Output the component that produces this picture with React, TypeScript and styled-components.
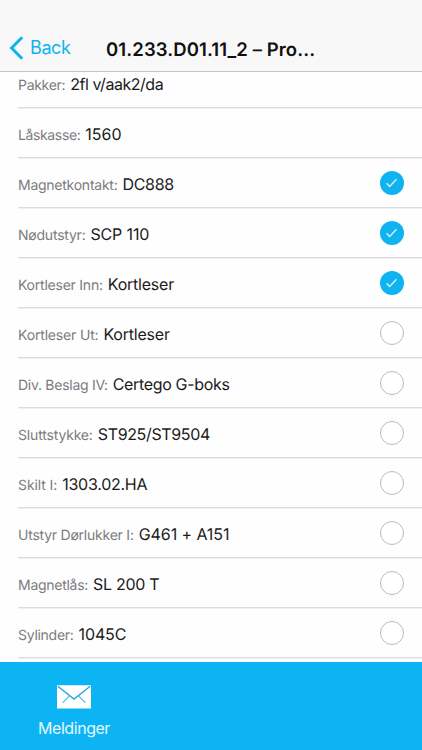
import React from "react";
import styled, { createGlobalStyle } from "styled-components";

const GlobalStyle = createGlobalStyle`
  * { box-sizing: border-box; }
  html, body { margin: 0; padding: 0; background: #fff; }
  body {
    font-family: Inter, "Liberation Sans", sans-serif;
    text-rendering: geometricPrecision;
  }
  button { font: inherit; border: 0; background: none; padding: 0; margin: 0; }
`;

const Screen = styled.div`
  display: flex;
  flex-direction: column;
  width: 422px;
  height: 750px;
  overflow: hidden;
  background: #fefefe;
`;

const NavBar = styled.header`
  flex: none;
  display: grid;
  grid-template-columns: 106px 210px 1fr;
  align-items: center;
  height: 72px;
  padding-top: 24px;
  background: #f8f8f8;
  border-bottom: 1px solid #c6c6c8;
`;

const BackButton = styled.button`
  display: flex;
  align-items: center;
  gap: 6px;
  padding-left: 9px;
  color: #0fb3f0;
  font-size: 18px;
  line-height: 24px;
  letter-spacing: -0.4px;
`;

const Title = styled.h1`
  margin: 0;
  padding-top: 4px;
  font-size: 18.5px;
  font-weight: 600;
  line-height: 24px;
  letter-spacing: 0.11px;
  white-space: nowrap;
  color: #101010;
`;

const List = styled.ul`
  flex: 1;
  min-height: 0;
  margin: 0;
  padding: 0 0 4px 18px;
  list-style: none;
  display: flex;
  flex-direction: column;
  justify-content: flex-end;
  overflow: hidden;
`;

const Row = styled.li`
  flex: none;
  display: flex;
  align-items: center;
  height: 50px;
  padding: 1px 18px 0 0;
  border-bottom: 1px solid #dcdcdd;
  box-shadow: 0 1px 0 #f1f1f1;
`;

const RowText = styled.div`
  flex: 1;
  display: flex;
  align-items: baseline;
  gap: 5px;
  padding-top: 3px;
  line-height: 24px;
  white-space: nowrap;
`;

const Label = styled.span<{ $spacing: number }>`
  font-size: 14px;
  letter-spacing: ${(p) => p.$spacing}px;
  color: #7c7c7e;
`;

const Value = styled.span<{ $spacing: number }>`
  font-size: 16px;
  letter-spacing: ${(p) => p.$spacing}px;
  color: #1b1b1b;
`;

const Check = styled.span<{ $checked: boolean }>`
  display: flex;
  align-items: center;
  justify-content: center;
  width: 24px;
  height: 24px;
  border-radius: 50%;
  border: ${(p) => (p.$checked ? "0" : "1px solid #bcbcbe")};
  background: ${(p) => (p.$checked ? "#0fb3f0" : "#fff")};
`;

const TabBar = styled.footer`
  flex: none;
  height: 88px;
  background: #0cb4f3;
`;

const Tab = styled.button`
  display: flex;
  flex-direction: column;
  align-items: center;
  width: 148px;
  padding-top: 23px;
  gap: 7px;
  color: #e4f8ff;
  font-size: 16px;
  line-height: 24px;
  letter-spacing: -0.45px;
`;

type Item = {
  label: string;
  value: string;
  checked?: boolean;
  labelSpacing: number;
  valueSpacing: number;
};

const items: Item[] = [
  { label: "Pakker:", value: "2fl v/aak2/da", labelSpacing: -0.3, valueSpacing: -0.46 },
  { label: "Låskasse:", value: "1560", labelSpacing: -0.37, valueSpacing: 0 },
  { label: "Magnetkontakt:", value: "DC888", checked: true, labelSpacing: -0.25, valueSpacing: -0.3 },
  { label: "Nødutstyr:", value: "SCP 110", checked: true, labelSpacing: -0.22, valueSpacing: -0.15 },
  { label: "Kortleser Inn:", value: "Kortleser", checked: true, labelSpacing: -0.23, valueSpacing: -0.22 },
  { label: "Kortleser Ut:", value: "Kortleser", checked: false, labelSpacing: -0.17, valueSpacing: -0.22 },
  { label: "Div. Beslag IV:", value: "Certego G-boks", checked: false, labelSpacing: -0.27, valueSpacing: -0.34 },
  { label: "Sluttstykke:", value: "ST925/ST9504", checked: false, labelSpacing: -0.17, valueSpacing: -0.35 },
  { label: "Skilt I:", value: "1303.02.HA", checked: false, labelSpacing: -0.1, valueSpacing: -0.25 },
  { label: "Utstyr Dørlukker I:", value: "G461 + A151", checked: false, labelSpacing: -0.23, valueSpacing: -0.08 },
  { label: "Magnetlås:", value: "SL 200 T", checked: false, labelSpacing: -0.27, valueSpacing: -0.3 },
  { label: "Sylinder:", value: "1045C", checked: false, labelSpacing: -0.27, valueSpacing: -0.15 },
];

const ChevronIcon = () => (
  <svg width="15" height="24" viewBox="0 0 15 24" fill="none">
    <path d="M13.2 1.2 2.6 12l10.6 10.8" stroke="currentColor" strokeWidth="3" />
  </svg>
);

const TickIcon = () => (
  <svg width="24" height="24" viewBox="0 0 24 24" fill="none">
    <path d="m6.6 12.3 3 3.2 6.9-7.2" stroke="#d9f4fe" strokeWidth="1.3" />
  </svg>
);

const EnvelopeIcon = () => (
  <svg width="34" height="24" viewBox="0 0 34 24" fill="none">
    <path d="M0 0.3h34v23.2H0z" fill="#fff" />
    <path d="M0.8 1.2 17 14 33.2 1.2" stroke="#22a9dc" strokeWidth="1.4" />
    <path d="M12.4 10.8 5.8 17.6M21.6 10.8l6.6 6.8" stroke="#45b9e5" strokeWidth="1.1" />
  </svg>
);

export default function App() {
  return (
    <>
      <GlobalStyle />
      <Screen>
        <NavBar>
          <BackButton>
            <ChevronIcon />
            Back
          </BackButton>
          <Title>01.233.D01.11_2 – Pro...</Title>
        </NavBar>
        <List>
          {items.map((item) => (
            <Row key={item.label}>
              <RowText>
                <Label $spacing={item.labelSpacing}>{item.label}</Label>
                <Value $spacing={item.valueSpacing}>{item.value}</Value>
              </RowText>
              {item.checked !== undefined && (
                <Check $checked={item.checked}>{item.checked && <TickIcon />}</Check>
              )}
            </Row>
          ))}
        </List>
        <TabBar>
          <Tab>
            <EnvelopeIcon />
            Meldinger
          </Tab>
        </TabBar>
      </Screen>
    </>
  );
}
